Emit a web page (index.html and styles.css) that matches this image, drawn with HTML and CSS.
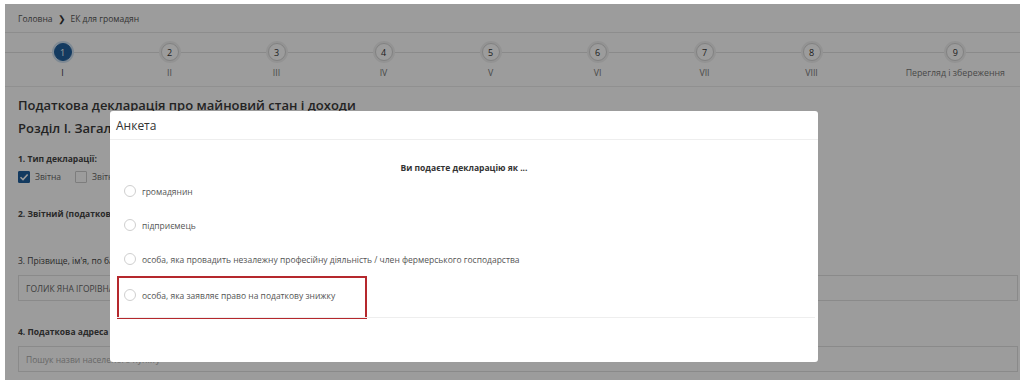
FILE: index.html
```html
<!DOCTYPE html>
<html lang="uk">
<head>
    <meta charset="UTF-8">
    <meta name="viewport" content="width=device-width, initial-scale=1.0">
    <title>Податкова декларація</title>
    <link rel="stylesheet" href="styles.css">
</head>
<body>
    <div class="page">
        <div class="breadcrumb">
            <span>Головна</span>
            <span class="crumb-arrow">&#x276F;</span>
            <span>ЕК для громадян</span>
        </div>

        <div class="stepper">
            <div class="step active"><div class="circle">1</div><div class="step-label">I</div></div>
            <div class="step"><div class="circle">2</div><div class="step-label">II</div></div>
            <div class="step"><div class="circle">3</div><div class="step-label">III</div></div>
            <div class="step"><div class="circle">4</div><div class="step-label">IV</div></div>
            <div class="step"><div class="circle">5</div><div class="step-label">V</div></div>
            <div class="step"><div class="circle">6</div><div class="step-label">VI</div></div>
            <div class="step"><div class="circle">7</div><div class="step-label">VII</div></div>
            <div class="step"><div class="circle">8</div><div class="step-label">VIII</div></div>
            <div class="step last"><div class="circle">9</div><div class="step-label">Перегляд і збереження</div></div>
        </div>

        <div class="content">
            <h1>Податкова декларація про майновий стан і доходи</h1>
            <h2>Розділ І. Загальні відомості</h2>

            <div class="field-label bold first">1. Тип декларації:</div>
            <div class="checks">
                <label class="check"><span class="box checked"><svg viewBox="0 0 12 12" width="12" height="12"><path d="M2.5 6.2 L5 8.6 L9.6 3.4" fill="none" stroke="#fff" stroke-width="1.5"/></svg></span>Звітна</label>
                <label class="check"><span class="box"></span>Звітна нова</label>
            </div>

            <div class="field-label bold">2. Звітний (податковий) період</div>

            <div class="field-label spaced">3. Прізвище, ім'я, по батькові</div>
            <div class="input">ГОЛИК ЯНА ІГОРІВНА</div>

            <div class="field-label bold">4. Податкова адреса</div>
            <div class="input small placeholder">Пошук назви населеного пункту</div>
        </div>

        <div class="overlay">
            <div class="modal">
                <div class="modal-header">Анкета</div>
                <div class="modal-body">
                    <div class="question">Ви подаєте декларацію як ...</div>
                    <div class="option"><span class="radio"></span>громадянин</div>
                    <div class="option"><span class="radio"></span>підприємець</div>
                    <div class="option wide"><span class="radio"></span>особа, яка провадить незалежну професійну діяльність / член фермерського господарства</div>
                    <div class="option marked"><span class="radio"></span>особа, яка заявляє право на податкову знижку</div>
                </div>
                <div class="modal-footer"></div>
            </div>
        </div>
    </div>
</body>
</html>
```

FILE: styles.css
```css
body {
    margin: 0;
    background-color: #fff;
    font-family: 'Open Sans', 'Noto Sans', sans-serif;
    color: #444;
    overflow: hidden;
}

.page {
    position: relative;
    margin: 4px 0 0 5px;
    width: 1015px;
    height: 376px;
    background-color: #fff;
    overflow: hidden;
}

.breadcrumb {
    display: flex;
    align-items: center;
    gap: 5px;
    height: 28px;
    padding-left: 13px;
    font-size: 8.5px;
    color: #555;
    border-bottom: 1px solid #e6e6e6;
}

.crumb-arrow {
    font-size: 9px;
    color: #333;
}

.stepper {
    display: grid;
    grid-template-columns: repeat(8, 107px) 1fr;
    padding: 10px 15px 8px 4px;
    background: linear-gradient(#e2e2e2, #e2e2e2) 0 19px / 100% 1px no-repeat;
    border-bottom: 1px solid #ececec;
}

.step {
    display: flex;
    flex-direction: column;
    align-items: center;
}

.step.last {
    justify-self: end;
}

.circle {
    width: 16px;
    height: 16px;
    border-radius: 50%;
    border: 1px solid #d4d4d4;
    box-shadow: 0 0 0 2px #f1f1f1;
    background-color: #fff;
    display: flex;
    align-items: center;
    justify-content: center;
    font-size: 9px;
    color: #333;
}

.step.active .circle {
    background-color: #205f9d;
    border-color: #205f9d;
    box-shadow: 0 0 0 2px #cfe0f0;
    color: #fff;
}

.step-label {
    margin-top: 7px;
    font-size: 8.8px;
    line-height: 10px;
    color: #777;
}

.step.active .step-label {
    color: #333;
}

.content {
    padding: 8px 2px 0 13px;
}

h1, h2 {
    margin: 0;
    font-size: 13px;
    line-height: 20px;
    font-weight: 600;
    color: #3a3a3a;
}

h2 {
    margin-top: 3px;
}

.field-label {
    font-size: 8.5px;
    line-height: 12px;
    color: #444;
    margin-top: 25px;
}

.field-label.first {
    margin-top: 15px;
}

.field-label.spaced {
    margin-top: 35px;
}

.bold {
    font-weight: 700;
}

.checks {
    display: flex;
    gap: 14px;
    margin-top: 6px;
    font-size: 8.5px;
    line-height: 12px;
    color: #666;
}

.check {
    display: flex;
    align-items: center;
    gap: 5px;
}

.box {
    width: 10px;
    height: 10px;
    border: 1px solid #ccc;
    border-radius: 1px;
    display: flex;
}

.box.checked {
    background-color: #205f9d;
    border-color: #205f9d;
}

.box svg {
    margin: -1px;
}

.input {
    margin-top: 8px;
    height: 24px;
    border: 1px solid #e2e2e2;
    display: flex;
    align-items: center;
    padding-left: 7px;
    font-size: 8.5px;
    color: #666;
}

.input.placeholder {
    color: #aaa;
}

.overlay {
    position: absolute;
    inset: 0;
    background-color: rgba(0, 0, 0, 0.39);
}

.modal {
    position: absolute;
    left: 105px;
    top: 107px;
    width: 708px;
    height: 251px;
    background-color: #fff;
    border-radius: 3px;
    display: flex;
    flex-direction: column;
}

.modal-header {
    height: 28px;
    display: flex;
    align-items: center;
    padding-left: 6px;
    font-size: 12px;
    color: #333;
    border-bottom: 1px solid #eee;
}

.modal-body {
    padding: 22px 0 0 7px;
}

.question {
    text-align: center;
    font-size: 8.5px;
    line-height: 12px;
    font-weight: 700;
    color: #333;
    margin-left: -7px;
}

.option {
    box-sizing: border-box;
    width: 250px;
    height: 34px;
    display: flex;
    align-items: center;
    gap: 6px;
    padding-left: 5px;
    border: 2px solid transparent;
    font-size: 8.5px;
    color: #555;
    white-space: nowrap;
}

.option.marked {
    height: 43px;
    padding-bottom: 5px;
    border-color: #b5282d;
}

.radio {
    width: 10px;
    height: 10px;
    border-radius: 50%;
    border: 1px solid #cfcfcf;
    flex-shrink: 0;
}

.modal-footer {
    flex: 1;
    margin: -2px 3px 0 7px;
    border-top: 1px solid #eee;
}
```
